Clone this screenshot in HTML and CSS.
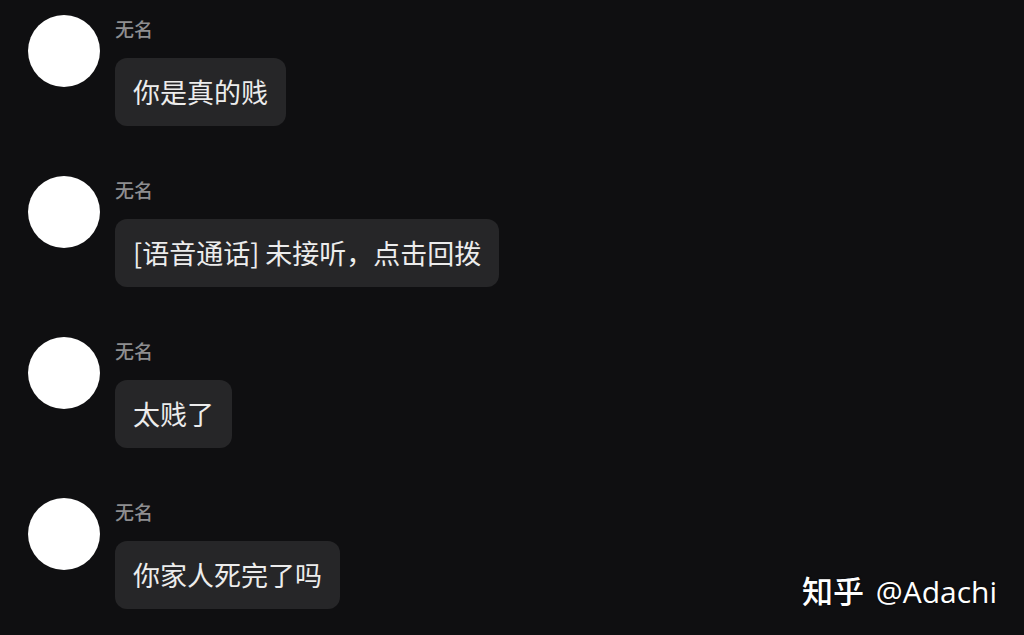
FILE: index.html
```html
<!DOCTYPE html>
<html lang="zh-CN">
<head>
    <meta charset="UTF-8">
    <meta name="viewport" content="width=device-width, initial-scale=1.0">
    <title>聊天记录</title>
    <link rel="stylesheet" href="styles.css">
</head>
<body>
    <div class="chat">
        <div class="msg">
            <div class="avatar"></div>
            <div class="body">
                <div class="name">无名</div>
                <div class="bubble">你是真的贱</div>
            </div>
        </div>
        <div class="msg">
            <div class="avatar"></div>
            <div class="body">
                <div class="name">无名</div>
                <div class="bubble">[语音通话] 未接听，点击回拨</div>
            </div>
        </div>
        <div class="msg">
            <div class="avatar"></div>
            <div class="body">
                <div class="name">无名</div>
                <div class="bubble">太贱了</div>
            </div>
        </div>
        <div class="msg">
            <div class="avatar"></div>
            <div class="body">
                <div class="name">无名</div>
                <div class="bubble">你家人死完了吗</div>
            </div>
        </div>
    </div>
    <div class="watermark"><span class="brand">知乎</span> @Adachi</div>
</body>
</html>
```

FILE: styles.css
```css
html, body {
    margin: 0;
    height: 100%;
}
body {
    font-family: "Noto Sans CJK SC", "Noto Sans", sans-serif;
    background-color: #0f0f11;
    overflow: hidden;
    position: relative;
}
.chat {
    display: flex;
    flex-direction: column;
    gap: 50px;
    padding: 15px 0 0 28px;
}
.msg {
    display: flex;
    gap: 15px;
    align-items: flex-start;
}
.avatar {
    width: 72px;
    height: 72px;
    border-radius: 50%;
    background: #ffffff;
    flex-shrink: 0;
}
.body {
    display: flex;
    flex-direction: column;
    align-items: flex-start;
}
.name {
    color: #8e8e90;
    font-size: 19px;
    line-height: 26px;
    margin-top: 1px;
    font-weight: 500;
}
.bubble {
    margin-top: 16px;
    background: #262628;
    color: #ececec;
    font-size: 27px;
    line-height: 32px;
    padding: 18px 18px;
    border-radius: 12px;
}
.watermark {
    position: absolute;
    right: 27px;
    bottom: 24px;
    color: #ffffff;
    font-size: 30px;
    line-height: 38px;
    font-family: "Open Sans", "Noto Sans CJK SC", sans-serif;
    text-shadow: 0 0 2px rgba(0, 0, 0, 0.6);
}
.brand {
    font-family: "Noto Sans CJK SC", sans-serif;
    font-size: 31px;
    font-weight: 500;
    margin-right: 4px;
}
```
